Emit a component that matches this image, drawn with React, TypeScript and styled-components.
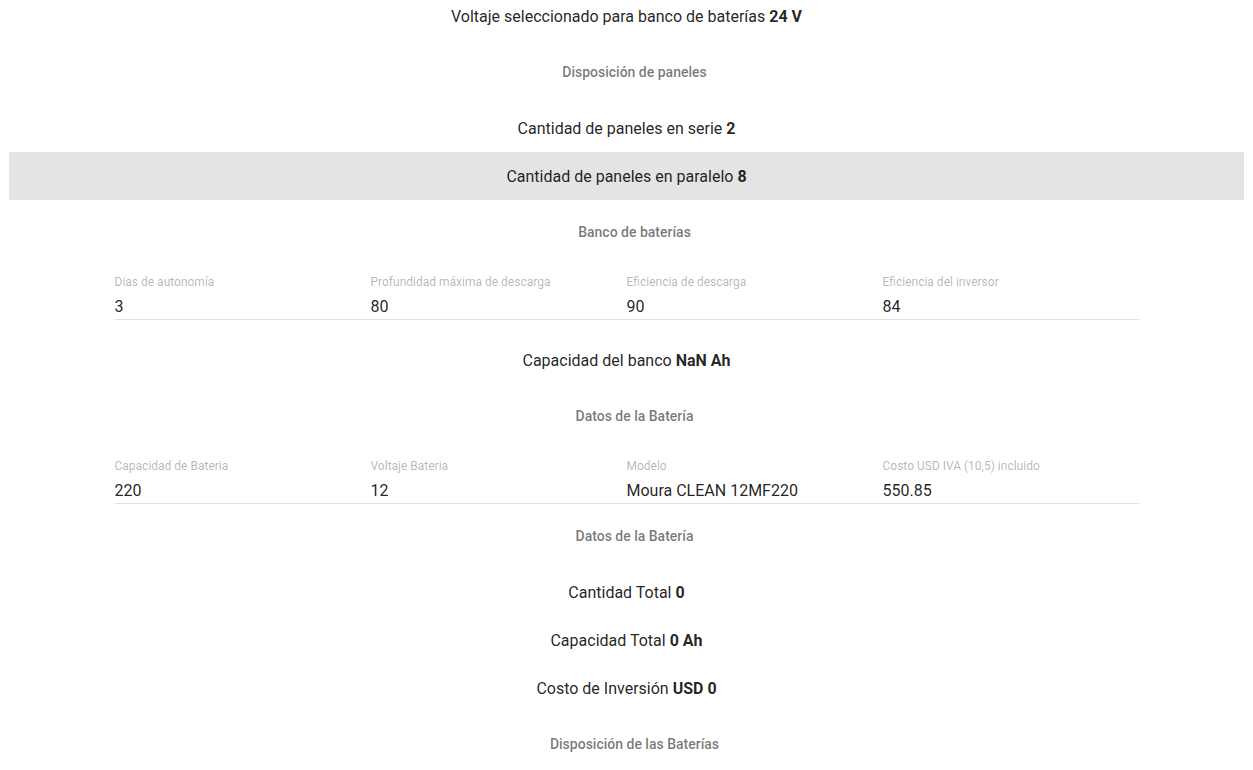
import React from "react";
import styled, { createGlobalStyle } from "styled-components";

const GlobalStyle = createGlobalStyle`
  html, body {
    margin: 0;
    padding: 0;
    background: #ffffff;
    font-family: Roboto, "Liberation Sans", Arial, sans-serif;
    color: rgba(0, 0, 0, 0.87);
    overflow: hidden;
  }
`;

const Page = styled.div`
  display: flex;
  flex-direction: column;
  margin-top: -8px;
  padding: 0 9px;
`;

const Row = styled.div<{ $shaded?: boolean; $spaced?: boolean }>`
  height: 48px;
  display: flex;
  align-items: center;
  justify-content: center;
  font-size: 16px;
  color: rgba(0, 0, 0, 0.87);
  background: ${(p) => (p.$shaded ? "#e4e4e4" : "transparent")};
  margin-top: ${(p) => (p.$spaced ? "16px" : "0")};
  white-space: pre;
`;

const Value = styled.b`
  font-weight: 700;
  margin-left: 4px;
`;

const Subtitle = styled.div`
  height: 64px;
  display: flex;
  align-items: center;
  justify-content: center;
  padding-left: 16px;
  font-size: 14px;
  font-weight: 500;
  color: rgba(0, 0, 0, 0.54);
`;

const FieldGrid = styled.div`
  width: 1024px;
  align-self: center;
  display: grid;
  grid-template-columns: repeat(4, 1fr);
  padding-top: 9px;
  border-bottom: 1px solid #e0e0e0;
`;

const Field = styled.div`
  display: flex;
  flex-direction: column;
`;

const FieldLabel = styled.div`
  font-size: 12px;
  line-height: 18px;
  color: rgba(0, 0, 0, 0.3);
`;

const FieldValue = styled.div`
  font-size: 16px;
  line-height: 24px;
  margin-top: 4px;
  color: rgba(0, 0, 0, 0.87);
`;

type F = { label: string; value: string };

const Fields = ({ items }: { items: F[] }) => (
  <FieldGrid>
    {items.map((f) => (
      <Field key={f.label}>
        <FieldLabel>{f.label}</FieldLabel>
        <FieldValue>{f.value}</FieldValue>
      </Field>
    ))}
  </FieldGrid>
);

export default function App() {
  return (
    <>
      <GlobalStyle />
      <Page>
        <Row>
          Voltaje seleccionado para banco de baterías<Value>24 V</Value>
        </Row>
        <Subtitle>Disposición de paneles</Subtitle>
        <Row>
          Cantidad de paneles en serie<Value>2</Value>
        </Row>
        <Row $shaded>
          Cantidad de paneles en paralelo<Value>8</Value>
        </Row>
        <Subtitle>Banco de baterías</Subtitle>
        <Fields
          items={[
            { label: "Dias de autonomía", value: "3" },
            { label: "Profundidad máxima de descarga", value: "80" },
            { label: "Eficiencia de descarga", value: "90" },
            { label: "Eficiencia del inversor", value: "84" },
          ]}
        />
        <Row $spaced>
          Capacidad del banco<Value>NaN Ah</Value>
        </Row>
        <Subtitle>Datos de la Batería</Subtitle>
        <Fields
          items={[
            { label: "Capacidad de Bateria", value: "220" },
            { label: "Voltaje Bateria", value: "12" },
            { label: "Modelo", value: "Moura CLEAN 12MF220" },
            { label: "Costo USD IVA (10,5) incluido", value: "550.85" },
          ]}
        />
        <Subtitle>Datos de la Batería</Subtitle>
        <Row>
          Cantidad Total<Value>0</Value>
        </Row>
        <Row>
          Capacidad Total<Value>0 Ah</Value>
        </Row>
        <Row>
          Costo de Inversión<Value>USD 0</Value>
        </Row>
        <Subtitle>Disposición de las Baterías</Subtitle>
      </Page>
    </>
  );
}
